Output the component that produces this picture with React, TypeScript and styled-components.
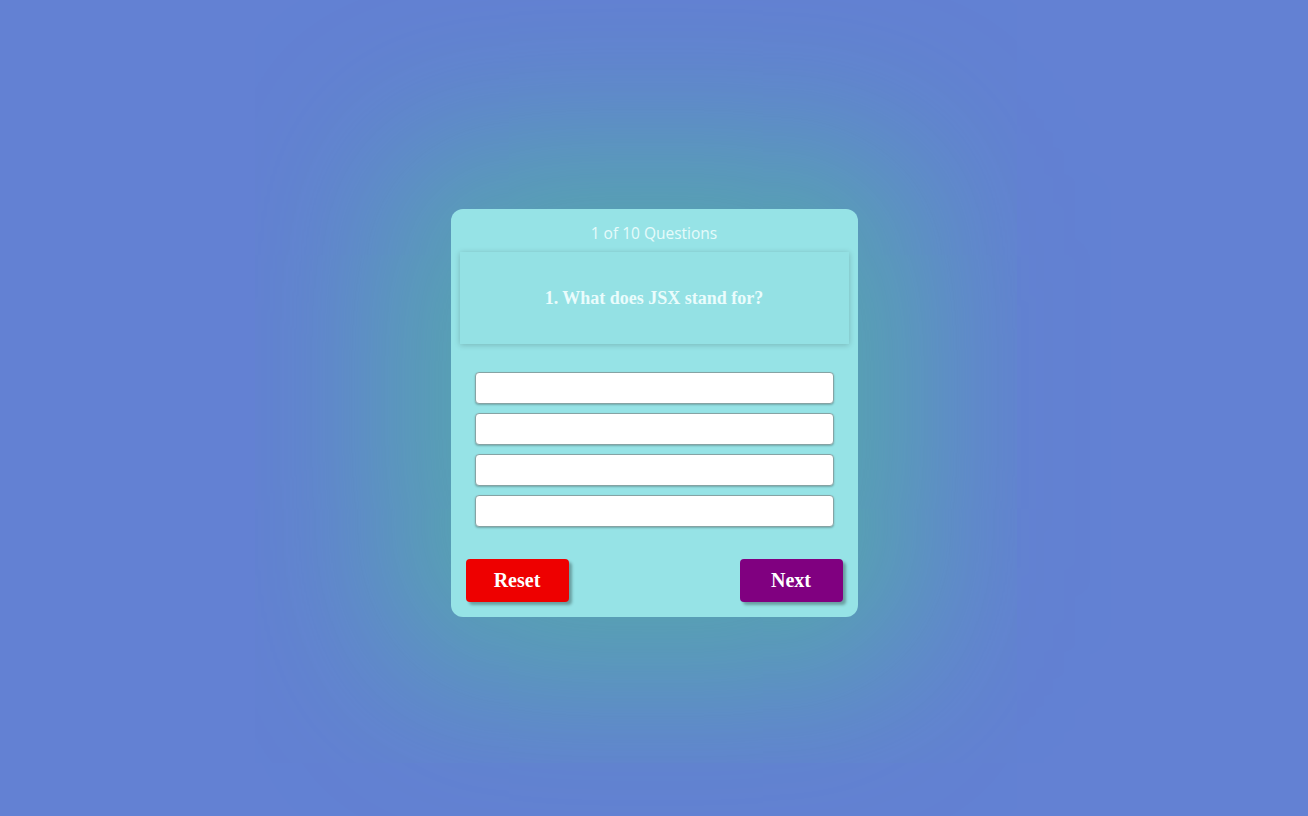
import React from "react";
import styled, { createGlobalStyle } from "styled-components";

const Global = createGlobalStyle`
  html, body { margin: 0; padding: 0; }
  body { background: #6381d3; font-family: "Liberation Serif", serif; }
`;

const Page = styled.div`
  width: 1308px;
  height: 816px;
  display: flex;
  justify-content: center;
  align-items: center;
  background: #6381d3;
  overflow: hidden;
`;

const Card = styled.div`
  width: 407px;
  box-sizing: border-box;
  margin-top: 10px;
  background: #96e3e6;
  border-radius: 12px;
  padding: 0 9px 15px;
  display: flex;
  flex-direction: column;
  box-shadow: 0 0 170px 50px rgba(82, 176, 164, 0.95);
`;

const Counter = styled.div`
  height: 43px;
  box-sizing: border-box;
  padding-top: 4px;
  display: flex;
  align-items: center;
  justify-content: center;
  font-family: "Open Sans", "Liberation Sans", sans-serif;
  font-size: 15.5px;
  color: #e6fbfb;
`;

const QuestionBox = styled.div`
  height: 92px;
  display: flex;
  align-items: center;
  justify-content: center;
  background: #94e1e4;
  box-shadow: 0 1px 6px rgba(0, 0, 0, 0.2);
  font-family: "Liberation Serif", serif;
  font-weight: bold;
  font-size: 18px;
  color: #eafcfc;
`;

const Options = styled.div`
  display: flex;
  flex-direction: column;
  gap: 9px;
  padding: 28px 15px 0;
`;

const Option = styled.div`
  height: 30px;
  background: #ffffff;
  border: 1px solid #86a3a4;
  border-radius: 4px;
  box-shadow: 0 1px 2px rgba(0, 0, 0, 0.25);
`;

const Actions = styled.div`
  display: flex;
  justify-content: space-between;
  padding: 32px 6px 0;
`;

const Button = styled.button<{ $bg: string }>`
  width: 103px;
  height: 43px;
  border: none;
  border-radius: 4px;
  background: ${(p) => p.$bg};
  color: #fff;
  font-family: "Liberation Serif", serif;
  font-weight: bold;
  font-size: 20px;
  box-shadow: 3px 3px 3px rgba(0, 0, 0, 0.3);
  cursor: pointer;
`;

export default function App() {
  return (
    <>
      <Global />
      <Page>
        <Card>
          <Counter>1 of 10 Questions</Counter>
          <QuestionBox>1. What does JSX stand for?</QuestionBox>
          <Options>
            <Option />
            <Option />
            <Option />
            <Option />
          </Options>
          <Actions>
            <Button $bg="#ee0000">Reset</Button>
            <Button $bg="#800080">Next</Button>
          </Actions>
        </Card>
      </Page>
    </>
  );
}
